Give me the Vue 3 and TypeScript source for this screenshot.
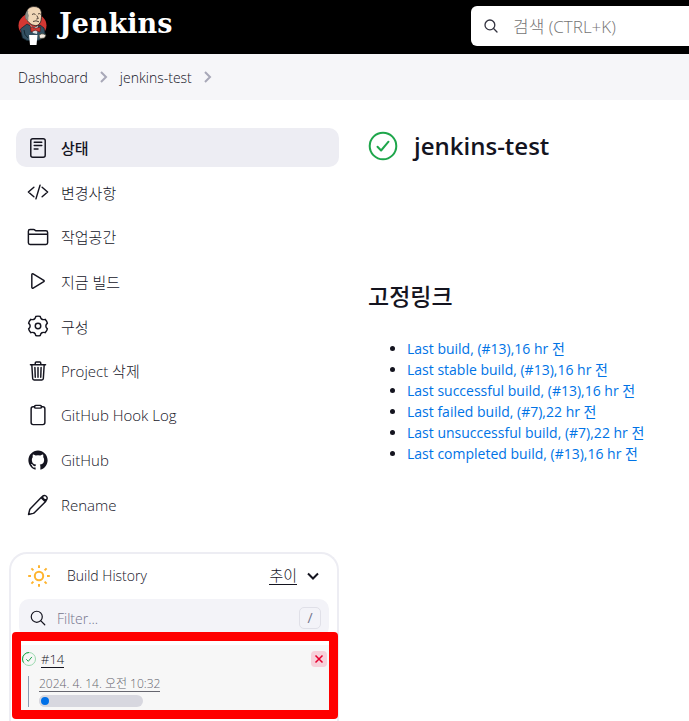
<script setup lang="ts">
interface Task {
  label: string
  icon: string
}

interface Permalink {
  label: string
  ago: string
}

const tasks: Task[] = [
  { label: '상태', icon: 'status' },
  { label: '변경사항', icon: 'changes' },
  { label: '작업공간', icon: 'folder' },
  { label: '지금 빌드', icon: 'play' },
  { label: '구성', icon: 'gear' },
  { label: 'Project 삭제', icon: 'trash' },
  { label: 'GitHub Hook Log', icon: 'clipboard' },
  { label: 'GitHub', icon: 'github' },
  { label: 'Rename', icon: 'pencil' },
]

const permalinks: Permalink[] = [
  { label: 'Last build, (#13)', ago: '16 hr 전' },
  { label: 'Last stable build, (#13)', ago: '16 hr 전' },
  { label: 'Last successful build, (#13)', ago: '16 hr 전' },
  { label: 'Last failed build, (#7)', ago: '22 hr 전' },
  { label: 'Last unsuccessful build, (#7)', ago: '22 hr 전' },
  { label: 'Last completed build, (#13)', ago: '16 hr 전' },
]

const progress = 9
</script>

<template>
  <div class="page">
    <header class="header">
      <a class="brand" href="#">
        <svg class="butler" viewBox="0 0 30 40" aria-hidden="true">
          <ellipse cx="14.500" cy="19.500" rx="14" ry="12.500" fill="#d33833" />
          <path d="M2.500 23 9 18l7 4 6-3 4 3 1.500 8-5 3.500-3 1H9L4.500 32Z" fill="#335061" stroke="#142630" stroke-width=".8" />
          <path d="m12 19 4 3 4-2-1 8-4-1Z" fill="#d8dde0" />
          <path d="M8.500 6C10 1.500 13 .4 17 .6c5 .4 7 4 6.500 9.400 0 4.500-1 8-4.500 9.500-4 .5-8-2-9.500-5C7.500 13.500 7.500 9 8.500 6Z" fill="#f0d6b7" stroke="#1d1919" stroke-width=".8" />
          <path d="M9 5C7 7 7 10 7.500 12.500l2.500 2.500c1-2-.3-3.500.8-5 .2-1.800-1.800-3-.3-5Z" fill="#8a8a84" />
          <path d="M14 8.500q2-1.500 3.500 0M20 8q1.500-1 2.800.3M18.800 9.500l1.500 3-2 .6M15 15.500q3-1.500 6 .3" fill="none" stroke="#3b2e28" stroke-width=".9" />
          <path d="m12.500 20.500 4.500 2 5.500-1.500-.5 5-4.800-1.800-4.200 1.800Z" fill="#d33833" stroke="#5d100e" stroke-width=".6" />
          <path d="M11 29h8.500l-1 10h-6.500Z" fill="#fff" />
          <path d="M21 29.500q2-2.500 4.500-1.500l2.500 1-1.500 3-4.500.5Z" fill="#f5ece2" stroke="#443" stroke-width=".7" />
          <path d="M6 24q0 5 4 8" fill="none" stroke="#142630" />
        </svg>
        <span class="brand-name">Jenkins</span>
      </a>
      <label class="search">
        <svg class="search-icon" viewBox="0 0 512 512" aria-hidden="true">
          <g class="line bold"><circle cx="221" cy="221" r="157" /><path d="M338 338 448 448" /></g>
        </svg>
        <input class="search-input" type="search" placeholder="검색 (CTRL+K)" aria-label="검색" />
      </label>
    </header>

    <nav class="crumbs" aria-label="breadcrumb">
      <a href="#">Dashboard</a>
      <svg class="crumb-arrow" viewBox="0 0 12 12" aria-hidden="true"><path d="m3 1 5 5-5 5" /></svg>
      <a href="#">jenkins-test</a>
      <svg class="crumb-arrow" viewBox="0 0 12 12" aria-hidden="true"><path d="m3 1 5 5-5 5" /></svg>
    </nav>

    <div class="body">
      <aside class="side">
        <nav class="tasks">
          <a v-for="(task, i) in tasks" :key="task.label" class="task" :class="{ active: i === 0 }" href="#">
            <svg class="icon" viewBox="0 0 512 512" aria-hidden="true">
              <g v-if="task.icon === 'status'" class="line">
                <rect x="88" y="40" width="336" height="432" rx="48" />
                <path d="M168 120h176M168 200h176M168 280h88" />
              </g>
              <g v-else-if="task.icon === 'changes'" class="line">
                <path d="M160 368 32 256l128-112M352 368l128-112-128-112M304 96l-96 320" />
              </g>
              <g v-else-if="task.icon === 'folder'" class="line">
                <path d="M440 432H72a40 40 0 0 1-40-40V120a40 40 0 0 1 40-40h75.890a40 40 0 0 1 22.190 6.720l27.840 18.560a40 40 0 0 0 22.190 6.720H440a40 40 0 0 1 40 40v240a40 40 0 0 1-40 40zM32 192h448" />
              </g>
              <g v-else-if="task.icon === 'play'" class="line">
                <path d="M112 111v290c0 17.440 17 28.520 31 20.160l247.900-148.370c12.120-7.250 12.120-26.330 0-33.580L143 90.840c-14-8.360-31 2.720-31 20.160z" />
              </g>
              <g v-else-if="task.icon === 'gear'" class="line">
                <circle cx="256" cy="256" r="64" />
                <path d="M205 34Q256 18 307 34 329 130 423 101 462 137 474 189 402 256 474 323 462 375 423 411 329 382 307 478 256 494 205 478 183 382 89 411 50 375 38 323 110 256 38 189 50 137 89 101 183 130 205 34Z" />
              </g>
              <g v-else-if="task.icon === 'trash'" class="line">
                <path d="m112 112 20 320c.950 18.490 14.400 32 32 32h184c17.670 0 30.870-13.510 32-32l20-320M80 112h352M192 112V72a24 24 0 0 1 24-24h80a24 24 0 0 1 24 24v40M256 176v224M184 176l8 224M328 176l-8 224" />
              </g>
              <g v-else-if="task.icon === 'clipboard'" class="line">
                <path d="M336 64h32a48 48 0 0 1 48 48v320a48 48 0 0 1-48 48H144a48 48 0 0 1-48-48V112a48 48 0 0 1 48-48h32" />
                <rect x="176" y="32" width="160" height="64" rx="26" />
              </g>
              <path
                v-else-if="task.icon === 'github'"
                fill="currentColor"
                d="M256 32C132.300 32 32 134.900 32 261.700c0 101.500 64.200 187.500 153.200 217.900a17.560 17.560 0 0 0 3.800.4c8.300 0 11.500-6.100 11.500-11.400 0-5.500-.2-19.900-.3-39.100a102.400 102.400 0 0 1-22.600 2.700c-43.100 0-52.900-33.500-52.900-33.500-10.200-26.500-24.900-33.600-24.900-33.600-19.500-13.700-.1-14.100 1.400-14.100h.1c22.500 2 34.300 23.800 34.300 23.800 11.200 19.600 26.200 25.100 39.600 25.100a63 63 0 0 0 25.600-6c2-14.800 7.800-24.900 14.200-30.700-49.700-5.800-102-25.500-102-113.500 0-25.100 8.700-45.600 23-61.600-2.300-5.800-10-29.200 2.200-60.800a18.640 18.640 0 0 1 5-.5c8.100 0 26.400 3.100 56.600 24.100a208.210 208.210 0 0 1 112.200 0c30.200-21 48.500-24.100 56.600-24.100a18.640 18.640 0 0 1 5 .5c12.200 31.600 4.500 55 2.200 60.800 14.300 16.100 23 36.600 23 61.600 0 88.200-52.400 107.600-102.300 113.300 8 7.100 15.200 21.100 15.200 42.500 0 30.700-.3 55.500-.3 63 0 5.400 3.100 11.500 11.400 11.500a19.350 19.350 0 0 0 4-.4C415.900 449.200 480 363.100 480 261.700 480 134.900 379.700 32 256 32z"
              />
              <g v-else class="line">
                <path d="M330 84 82 336q-14 14-20 34l-26 106 106-26q20-6 34-20L428 182M330 84l34-34q24-20 60-12 38 12 46 50 2 26-18 48l-24 46M330 84l98 98M364 54q-4 40 26 66 26 22 66 14" />
              </g>
            </svg>
            <span>{{ task.label }}</span>
          </a>
        </nav>

        <section class="history">
          <div class="history-head">
            <svg class="sun" viewBox="0 0 24 24" aria-hidden="true">
              <circle cx="12" cy="12" r="4.200" />
              <path d="M12 1.200v2.800M12 20v2.800M1.200 12H4M20 12h2.800M4.400 4.400l2 2M17.600 17.600l2 2M4.400 19.600l2-2M17.600 6.400l2-2" />
            </svg>
            <span class="history-title">Build History</span>
            <a class="trend" href="#">추이</a>
            <button class="collapse" type="button" aria-label="Build History">
              <svg viewBox="0 0 12 12" aria-hidden="true"><path d="m1 3.500 5 5 5-5" /></svg>
            </button>
          </div>
          <label class="filter">
            <svg class="filter-icon" viewBox="0 0 512 512" aria-hidden="true">
              <g class="line"><circle cx="221" cy="221" r="157" /><path d="M338 338 448 448" /></g>
            </svg>
            <input class="filter-input" type="search" placeholder="Filter..." aria-label="Filter" />
            <kbd class="key">/</kbd>
          </label>

          <div class="build">
            <div class="build-row">
              <svg class="build-status" viewBox="0 0 16 16" aria-hidden="true">
                <circle cx="8" cy="8" r="6.500" stroke="#9ad9ae" />
                <path d="M8 1.500a6.500 6.500 0 0 0-6.500 6.500q0 2 1 3.600M5.300 8.300l2 2 3.600-4.400" stroke="#1ea64b" />
              </svg>
              <a class="build-number" href="#">#14</a>
              <button class="stop" type="button" aria-label="Stop">
                <svg viewBox="0 0 16 16" aria-hidden="true"><path d="m4.500 4.500 7 7m0-7-7 7" /></svg>
              </button>
            </div>
            <div class="build-detail">
              <a class="build-date" href="#">2024. 4. 14. 오전 10:32</a>
              <div class="bar" role="progressbar" aria-label="#14" :aria-valuenow="progress">
                <div class="bar-fill" :style="{ width: progress + '%' }"></div>
              </div>
            </div>
          </div>
          <div class="highlight"></div>
        </section>
      </aside>

      <main class="main">
        <div class="title">
          <svg class="title-icon" viewBox="0 0 30 30" aria-hidden="true">
            <circle cx="15" cy="15" r="13.300" />
            <path d="m9.500 15.700 3.600 3.800 7.400-8.800" />
          </svg>
          <h1>jenkins-test</h1>
        </div>
        <h2>고정링크</h2>
        <ul class="permalinks">
          <li v-for="link in permalinks" :key="link.label">
            <a href="#">{{ link.label }},{{ link.ago }}</a>
          </li>
        </ul>
      </main>
    </div>
  </div>
</template>

<style>
body {
  margin: 0;
}
</style>

<style scoped>
.page {
  display: flex;
  flex-direction: column;
  box-sizing: border-box;
  height: 100vh;
  overflow: hidden;
  background: #fff;
  color: #14141f;
  font-family: "Open Sans", "Noto Sans CJK KR", sans-serif;
  font-size: 14px;
  font-weight: 300;
}
a {
  color: inherit;
  text-decoration: none;
}
input,
button {
  font: inherit;
  border: 0;
  padding: 0;
  background: none;
}
.header {
  display: flex;
  flex: none;
  justify-content: space-between;
  height: 54px;
  background: #000;
}
.brand {
  display: flex;
  align-items: center;
  gap: 11px;
  padding-left: 18px;
  color: #fff;
}
.butler {
  width: 30px;
  height: 40px;
  margin-top: -2px;
}
.brand-name {
  margin-top: -6px;
  font: bold 27px/40px "DejaVu Serif", serif;
}
.search {
  display: flex;
  align-items: center;
  gap: 14px;
  width: 218px;
  height: 40px;
  margin-top: 6px;
  padding-left: 12px;
  box-sizing: border-box;
  border-radius: 6px 0 0 6px;
  background: #fff;
}
.search-icon {
  width: 16px;
  height: 16px;
  color: #333340;
}
.search-input {
  flex: 1;
  min-width: 0;
  font-size: 17px;
  outline: 0;
}
.search-input::placeholder {
  color: #757575;
  opacity: 1;
}
.crumbs {
  display: flex;
  flex: none;
  align-items: center;
  gap: 10px;
  height: 46px;
  padding-left: 18px;
  background: #f6f6f9;
}
.crumb-arrow {
  width: 12px;
  height: 12px;
  fill: none;
  stroke: #a8a8b8;
  stroke-width: 2;
}
.body {
  display: grid;
  flex: 1;
  grid-template-columns: 339px minmax(0, 1fr);
  gap: 29px;
  min-height: 0;
}
.side {
  display: flex;
  flex-direction: column;
  padding-top: 28px;
}
.tasks {
  display: flex;
  flex: none;
  flex-direction: column;
  justify-content: space-between;
  min-height: 396px;
  padding-left: 16px;
}
.task {
  display: flex;
  align-items: center;
  gap: 12px;
  height: 39px;
  padding-left: 11px;
  border-radius: 10px;
  font-size: 15px;
}
.active {
  background: #ededf3;
  font-weight: 500;
}
.icon {
  width: 22px;
  height: 22px;
}
.line {
  fill: none;
  stroke: currentColor;
  stroke-width: 34;
  stroke-linecap: round;
  stroke-linejoin: round;
}
.bold {
  stroke-width: 42;
}
.history {
  position: relative;
  display: flex;
  flex: 1;
  flex-direction: column;
  margin: 28px 0 0 9px;
  border: 2px solid #ededf3;
  border-bottom: 0;
  border-radius: 18px 18px 0 0;
}
.history-head {
  display: flex;
  align-items: center;
  box-sizing: border-box;
  height: 45px;
  padding: 0 18px 2px 16px;
}
.sun {
  width: 24px;
  height: 24px;
  margin-right: 16px;
  fill: none;
  stroke: #feb42f;
  stroke-width: 2;
}
.history-title {
  flex: 1;
}
.trend {
  border-bottom: 1px solid #14141f;
  font-size: 15px;
  line-height: 18px;
}
.collapse {
  display: flex;
  margin-left: 10px;
  color: inherit;
}
.collapse svg {
  width: 12px;
  height: 12px;
  fill: none;
  stroke: currentColor;
  stroke-width: 2;
}
.filter {
  display: flex;
  align-items: center;
  height: 38px;
  margin: 0 8px;
  padding: 0 8px 0 10px;
  border-radius: 10px;
  background: #f3f3f8;
}
.filter-icon {
  width: 18px;
  height: 18px;
  margin-right: 10px;
}
.filter-input {
  flex: 1;
  min-width: 0;
  outline: 0;
}
.filter-input::placeholder {
  color: #73738c;
  opacity: 1;
}
.key {
  width: 20px;
  border: 1px solid #e0e0e8;
  border-radius: 5px;
  color: #73738c;
  font: 14px/20px "Open Sans", sans-serif;
  text-align: center;
}
.build {
  margin: 8px 7px 0 10px;
  padding: 5px 3px 3px 0;
  background: #f7f7f7;
}
.build-row {
  display: flex;
  align-items: center;
  height: 18px;
}
.build-status {
  width: 16px;
  height: 16px;
  margin-right: 4px;
  fill: none;
  stroke-width: 1;
}
.build-number {
  border-bottom: 1px solid currentColor;
  font-size: 13px;
  line-height: 16px;
}
.stop {
  display: flex;
  margin-left: auto;
  border-radius: 4px;
  background: #f7d1da;
  color: #e6002e;
}
.stop svg {
  width: 16px;
  height: 16px;
  fill: none;
  stroke: currentColor;
  stroke-width: 1.500;
}
.build-detail {
  display: flex;
  flex-direction: column;
  align-items: flex-start;
  gap: 3px;
  margin: 8px 0 0 7px;
  padding-left: 10px;
  border-left: 1px solid #8c9bb0;
}
.build-date {
  border-bottom: 1px solid currentColor;
  color: #66666f;
  font-size: 12px;
  line-height: 15px;
}
.bar {
  width: 104px;
  height: 12px;
  border-radius: 6px;
  background: #d7d7df;
}
.bar-fill {
  box-sizing: border-box;
  min-width: 12px;
  height: 12px;
  border: 2px solid #d7d7df;
  border-radius: 6px;
  background: #0070e8;
}
.highlight {
  position: absolute;
  inset: 78px -1px auto 1px;
  height: 69px;
  border: 9px solid #f00;
  border-radius: 4px;
  pointer-events: none;
}
.main {
  padding: 30px 16px 0 0;
}
.title {
  display: flex;
  align-items: center;
  gap: 16px;
}
.title-icon {
  width: 30px;
  height: 30px;
  fill: none;
  stroke: #1ea64b;
  stroke-width: 2;
  stroke-linecap: round;
  stroke-linejoin: round;
}
h1 {
  margin: 0;
  font-size: 24px;
  font-weight: 600;
  line-height: 32px;
}
h2 {
  margin: 118px 0 0;
  font-size: 23px;
  font-weight: 500;
  line-height: 32px;
}
.permalinks {
  margin: 26px 0 0;
  padding-left: 39px;
}
.permalinks li {
  line-height: 21px;
}
.permalinks a {
  color: #0073e6;
  font-weight: 400;
}
</style>
